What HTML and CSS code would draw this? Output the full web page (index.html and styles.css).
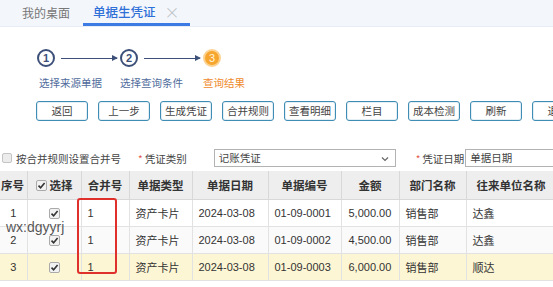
FILE: index.html
```html
<!DOCTYPE html>
<html lang="zh-CN">
<head>
<meta charset="utf-8">
<title>单据生凭证</title>
<link rel="stylesheet" href="styles.css">
</head>
<body>
<div class="page">
  <div class="tabs">
    <div class="tab">我的桌面</div>
    <div class="tab active">单据生凭证<span class="close">×</span></div>
  </div>

  <div class="steps">
    <div class="step done">
      <div class="step-head"><span class="circle">1</span><span class="conn"></span></div>
      <div class="step-label">选择来源单据</div>
    </div>
    <div class="step done">
      <div class="step-head"><span class="circle">2</span><span class="conn"></span></div>
      <div class="step-label">选择查询条件</div>
    </div>
    <div class="step current">
      <div class="step-head"><span class="circle">3</span></div>
      <div class="step-label">查询结果</div>
    </div>
  </div>

  <div class="toolbar">
    <button class="btn">返回</button>
    <button class="btn">上一步</button>
    <button class="btn">生成凭证</button>
    <button class="btn">合并规则</button>
    <button class="btn">查看明细</button>
    <button class="btn">栏目</button>
    <button class="btn">成本检测</button>
    <button class="btn">刷新</button>
    <button class="btn">退出</button>
  </div>

  <div class="filters">
    <span class="cb-plain"></span>
    <span class="f-text">按合并规则设置合并号</span>
    <span class="f-label lbl-type"><span class="req">*</span>凭证类别</span>
    <div class="select">记账凭证<svg class="chev" width="8" height="6" viewBox="0 0 8 6"><path d="M1 1.5 L4 4.5 L7 1.5" fill="none" stroke="#666" stroke-width="1.2"/></svg></div>
    <span class="f-label lbl-date"><span class="req">*</span>凭证日期</span>
    <div class="input">单据日期</div>
  </div>

  <div class="grid-wrap">
    <table class="grid">
      <colgroup>
        <col class="c-no"><col class="c-sel"><col class="c-merge"><col class="c-type"><col class="c-date"><col class="c-code"><col class="c-amt"><col class="c-dept"><col class="c-unit"><col class="c-more">
      </colgroup>
      <thead>
        <tr>
          <th>序号</th>
          <th><span class="cb checked"><svg width="9" height="9" viewBox="0 0 9 9"><path d="M1.5 4.6 L3.6 6.8 L7.6 2" fill="none" stroke="#333" stroke-width="1.6"/></svg></span>选择</th>
          <th>合并号</th>
          <th>单据类型</th>
          <th>单据日期</th>
          <th>单据编号</th>
          <th>金额</th>
          <th>部门名称</th>
          <th>往来单位名称</th>
          <th></th>
        </tr>
      </thead>
      <tbody>
        <tr class="r1">
          <td class="ctr">1</td>
          <td class="ctr"><span class="cb checked"><svg width="9" height="9" viewBox="0 0 9 9"><path d="M1.5 4.6 L3.6 6.8 L7.6 2" fill="none" stroke="#333" stroke-width="1.6"/></svg></span></td>
          <td>1</td>
          <td>资产卡片</td>
          <td>2024-03-08</td>
          <td>01-09-0001</td>
          <td class="amt">5,000.00</td>
          <td>销售部</td>
          <td>达鑫</td>
          <td></td>
        </tr>
        <tr class="r2">
          <td class="ctr">2</td>
          <td class="ctr"><span class="cb checked"><svg width="9" height="9" viewBox="0 0 9 9"><path d="M1.5 4.6 L3.6 6.8 L7.6 2" fill="none" stroke="#333" stroke-width="1.6"/></svg></span></td>
          <td>1</td>
          <td>资产卡片</td>
          <td>2024-03-08</td>
          <td>01-09-0002</td>
          <td class="amt">4,500.00</td>
          <td>销售部</td>
          <td>达鑫</td>
          <td></td>
        </tr>
        <tr class="r3">
          <td class="ctr">3</td>
          <td class="ctr"><span class="cb checked"><svg width="9" height="9" viewBox="0 0 9 9"><path d="M1.5 4.6 L3.6 6.8 L7.6 2" fill="none" stroke="#333" stroke-width="1.6"/></svg></span></td>
          <td>1</td>
          <td>资产卡片</td>
          <td>2024-03-08</td>
          <td>01-09-0003</td>
          <td class="amt">6,000.00</td>
          <td>销售部</td>
          <td>顺达</td>
          <td></td>
        </tr>
      </tbody>
    </table>
    <div class="mark"></div>
    <div class="watermark">wx:dgyyrj</div>
  </div>
</div>
</body>
</html>
```

FILE: styles.css
```css
* { box-sizing: border-box; }
html, body {
  margin: 0;
  padding: 0;
  background: #fff;
  overflow: hidden;
}
body {
  font-family: "Liberation Sans", "Noto Sans CJK SC", sans-serif;
  font-size: 11px;
  color: #333;
  width: 553px;
  height: 287px;
}
.page { width: 553px; overflow: hidden; }

/* tabs */
.tabs {
  height: 27px;
  background: #f3f6fb;
  display: flex;
  align-items: stretch;
  padding-left: 22px;
  border-bottom: 1px solid #e8edf5;
  white-space: nowrap;
}
.tab {
  font-family: "Noto Sans CJK SC", sans-serif;
  font-size: 12px;
  color: #777;
  line-height: 26px;
  padding-right: 13px;
}
.tab.active {
  padding: 0 10px 0 10px;
  color: #2f6fd8;
  font-size: 12.5px;
  font-weight: 500;
  border-bottom: 3px solid #3b7be3;
  line-height: 25px;
  display: flex;
  align-items: center;
}
.close {
  color: #b5b9c0;
  font-weight: 300;
  font-size: 15px;
  margin-left: 9px;
  line-height: 20px;
}

/* steps */
.steps {
  display: flex;
  padding-left: 37px;
  margin-top: 22px;
}
.step { width: 83px; display: flex; flex-direction: column; }
.step.current { width: 60px; }
.step-head { display: flex; align-items: center; height: 18px; }
.circle {
  width: 18px;
  height: 18px;
  border-radius: 50%;
  border: 2px solid #3d5079;
  color: #3d5079;
  font-size: 11px;
  font-weight: bold;
  line-height: 14px;
  text-align: center;
  flex: none;
}
.current .circle {
  background: #f6a62f;
  border-color: #fcd290;
  color: #fff4dc;
  font-weight: normal;
}
.conn {
  flex: 1;
  height: 1px;
  background: #3d5079;
  margin: 0 3px 0 6px;
  position: relative;
}
.conn::after {
  content: "";
  position: absolute;
  right: -1px;
  top: -3px;
  border-left: 6px solid #3d5079;
  border-top: 3.5px solid transparent;
  border-bottom: 3.5px solid transparent;
}
.step-label {
  font-family: "Noto Sans CJK SC", sans-serif;
  font-size: 10.5px;
  color: #4f6c9c;
  margin-top: 9px;
  line-height: 14px;
  white-space: nowrap;
}
.step:first-child .step-label { padding-left: 2px; }
.current .step-label { color: #ef8a2c; }

/* toolbar */
.toolbar {
  display: flex;
  gap: 10px;
  padding-left: 36px;
  margin-top: 11px;
  white-space: nowrap;
}
.btn {
  flex: none;
  width: 52px;
  height: 20px;
  padding: 0;
  background: #fff;
  border: 1px solid #3f8db5;
  border-radius: 3px;
  box-shadow: inset 0 0 0 1px #e3eef5;
  font-family: "Noto Sans CJK SC", sans-serif;
  font-size: 10.5px;
  color: #444;
  line-height: 18px;
  text-align: center;
  overflow: hidden;
}

/* filters */
.filters {
  display: flex;
  align-items: center;
  margin-top: 28px;
  height: 18px;
  padding-left: 2px;
  white-space: nowrap;
  font-family: "Noto Sans CJK SC", sans-serif;
  font-size: 10.5px;
  color: #444;
}
.cb-plain {
  width: 10px;
  height: 10px;
  border: 1px solid #c4c4c4;
  background: #ececec;
  border-radius: 2px;
  flex: none;
}
.f-text { margin-left: 4px; }
.f-label { color: #444; }
.lbl-type { margin-left: 17px; }
.lbl-date { margin-left: 20px; }
.req { color: #e35d4f; margin-right: 2px; font-size: 10px; }
.select {
  margin-left: 27px;
  width: 182px;
  height: 18px;
  border: 1px solid #b3b3b3;
  padding-left: 4px;
  line-height: 16px;
  position: relative;
  flex: none;
}
.chev { position: absolute; right: 6px; top: 6px; }
.input {
  margin-left: 1px;
  width: 100px;
  height: 18px;
  border: 1px solid #b3b3b3;
  padding-left: 4px;
  line-height: 16px;
  flex: none;
}

/* grid */
.grid-wrap {
  position: relative;
  margin-top: 4px;
}
.grid {
  border-collapse: collapse;
  table-layout: fixed;
  width: 650px;
}
.c-no { width: 27px; }
.c-sel { width: 54px; }
.c-merge { width: 48px; }
.c-type { width: 63px; }
.c-date { width: 76px; }
.c-code { width: 73px; }
.c-amt { width: 58px; }
.c-dept { width: 67px; }
.c-unit { width: 90px; }
.c-more { width: 94px; }
.grid th {
  height: 28px;
  background: #eeeeee;
  border: 1px solid #d8d8d8;
  border-top: none;
  font-family: "Noto Sans CJK SC", sans-serif;
  font-size: 11.5px;
  font-weight: bold;
  color: #333;
  text-align: center;
  padding: 0;
  white-space: nowrap;
  overflow: hidden;
}
.grid th:first-child { border-left: none; text-align: left; padding-left: 1px; }
.grid th .cb { margin-right: 3px; vertical-align: -1px; }
.grid td {
  height: 27px;
  border: 1px solid #e2e2e2;
  padding: 0 0 0 6px;
  white-space: nowrap;
  overflow: hidden;
  color: #333;
  font-size: 11px;
}
.grid td:first-child { border-left: none; }
.grid td.ctr { text-align: center; padding: 0; }
.grid td.amt { padding-left: 7px; }
.r1 td { background: #ffffff; }
.r2 td { background: #fafafa; }
.r3 td { background: #fdf6d4; }
.cb {
  display: inline-block;
  width: 11px;
  height: 11px;
  border: 1px solid #aaa;
  border-radius: 2px;
  background: #f2f2f2;
  vertical-align: middle;
  position: relative;
}
.cb svg { position: absolute; left: 0; top: 0; }

.mark {
  position: absolute;
  left: 77px;
  top: 27px;
  width: 40px;
  height: 76px;
  border: 2px solid #e0302b;
  border-radius: 3px;
}
.watermark {
  position: absolute;
  left: 6px;
  top: 48px;
  font-family: "Liberation Sans", sans-serif;
  font-size: 14px;
  color: rgba(55, 55, 55, 0.85);
  line-height: 16px;
}
```
